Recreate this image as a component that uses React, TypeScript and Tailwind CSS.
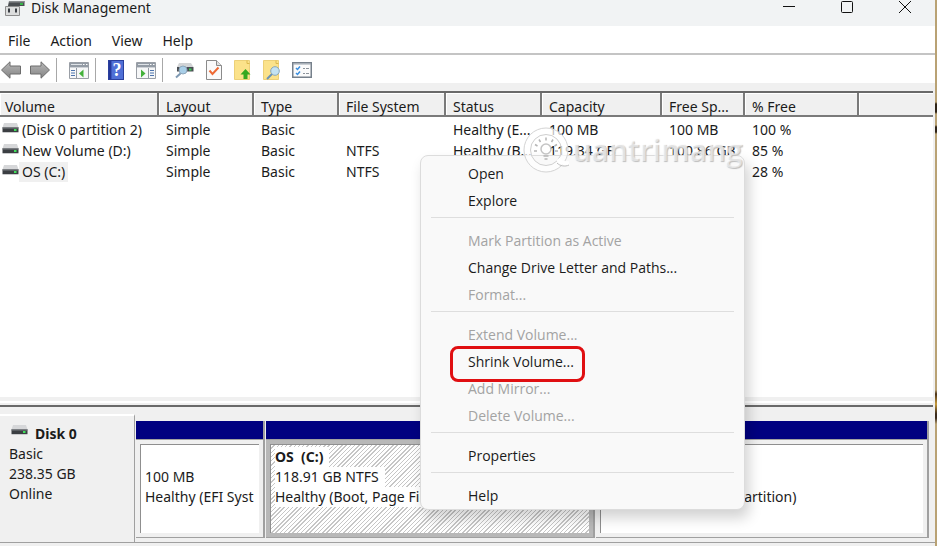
import type { ReactNode } from "react";

const volumes = [
  { name: "(Disk 0 partition 2)", layout: "Simple", type: "Basic", fs: "", status: "Healthy (E...", capacity: "100 MB", free: "100 MB", pct: "100 %" },
  { name: "New Volume (D:)", layout: "Simple", type: "Basic", fs: "NTFS", status: "Healthy (B...", capacity: "119.34 GB", free: "100.86 GB", pct: "85 %" },
  { name: "OS (C:)", layout: "Simple", type: "Basic", fs: "NTFS", status: "", capacity: "", free: "", pct: "28 %", selected: true },
];

const columns = ["Volume", "Layout", "Type", "File System", "Status", "Capacity", "Free Sp...", "% Free", ""];

const menuGroups: { label: string; disabled?: boolean; marked?: boolean }[][] = [
  [{ label: "Open" }, { label: "Explore" }],
  [{ label: "Mark Partition as Active", disabled: true }, { label: "Change Drive Letter and Paths..." }, { label: "Format...", disabled: true }],
  [
    { label: "Extend Volume...", disabled: true },
    { label: "Shrink Volume...", marked: true },
    { label: "Add Mirror...", disabled: true },
    { label: "Delete Volume...", disabled: true },
  ],
  [{ label: "Properties" }],
  [{ label: "Help" }],
];

function DriveIcon() {
  return (
    <svg width="17" height="10" viewBox="0 0 17 10" className="shrink-0" aria-hidden="true">
      <path d="M2 0h13l1.500 4.500H.5z" fill="#d6d7d9" />
      <path d="M.5 4.500h16V9H.5z" fill="#3b3e42" />
      <path d="M.5 4h16v1.500H.5z" fill="#7b7e82" />
      <path d="M12 6h2.500v2H12z" fill="#3fe05a" />
      <path d="M.5 9h16v1H.5z" fill="#c9cacc" />
    </svg>
  );
}

function ArrowIcon({ right }: { right?: boolean }) {
  return (
    <svg width="20" height="18" viewBox="0 0 20 18" className={right ? "-scale-x-100" : ""} aria-hidden="true">
      <defs>
        <linearGradient id="arrowFill" x1="0" y1="0" x2="0" y2="1">
          <stop offset="0" stopColor="#b8b8b8" />
          <stop offset="1" stopColor="#848484" />
        </linearGradient>
      </defs>
      <path d="M.5 9 9 .8V5h10.500v8H9v4.200z" fill="url(#arrowFill)" stroke="#6d6d6d" strokeLinejoin="round" />
    </svg>
  );
}

function PaneIcon({ right }: { right?: boolean }) {
  return (
    <svg width="20" height="17" viewBox="0 0 20 17" aria-hidden="true">
      <path d="M.5.5h19v16H.5z" fill="#f6f7f8" stroke="#9a9fa6" />
      <path d="M1 1h18v4H1z" fill="#939ba5" />
      <path d="M2 2.500h11" stroke="#dfe3e7" />
      <path d="M14 2.500h1.500M17 2.500h1.500" stroke="#fff" />
      <path d="M1 5.500h18" stroke="#cdd1d6" />
      {right ? (
        <>
          <path d="M12.500 6v10" stroke="#9299a2" />
          <path d="M14 8.500h4M14 11h4M14 13.500h4" stroke="#4d74ae" />
          <path d="m5 7.500 4.500 4-4.500 4z" fill="#43b13a" />
        </>
      ) : (
        <>
          <path d="M7.500 6v10" stroke="#9299a2" />
          <path d="M2 8.500h4M2 11h4M2 13.500h4" stroke="#4d74ae" />
          <path d="m14.500 7.500-4.500 4 4.500 4z" fill="#43b13a" />
        </>
      )}
    </svg>
  );
}

function HelpIcon() {
  return (
    <span className="flex h-5 w-4 items-center justify-center border border-[#2a3f9d] bg-linear-to-r from-[#24379a] from-15% to-[#4f6fd6] to-20% pl-0.5 font-['Liberation_Serif',serif] text-lg leading-5 font-bold text-white">
      ?
    </span>
  );
}

function DiskSearchIcon() {
  return (
    <svg width="19" height="17" viewBox="0 0 19 17" aria-hidden="true">
      <path d="M4 1h12l2.500 4H2z" fill="#d2d4d6" />
      <path d="M2 5h16.500v4.500H2z" fill="#4a4e53" />
      <path d="M14 6.500h2.500v2H14z" fill="#3fd15a" />
      <path d="m6 11-5 4.500" stroke="#7f99b3" strokeWidth="2" />
      <circle cx="8" cy="8" r="4" fill="#a9cfe8" stroke="#8ea7bb" />
    </svg>
  );
}

function CheckPageIcon() {
  return (
    <svg width="16" height="20" viewBox="0 0 16 20" aria-hidden="true">
      <path d="M.5.500h10l5 5v14H.5z" fill="#fafafa" stroke="#8b8b8b" />
      <path d="M10.500.500v5h5" fill="#e2e2e2" stroke="#8b8b8b" />
      <path d="m3.500 10.500 3 3.500 6-6.500" fill="none" stroke="#ee6a35" strokeWidth="2" />
    </svg>
  );
}

function FolderUpIcon() {
  return (
    <svg width="17" height="20" viewBox="0 0 17 20" aria-hidden="true">
      <path d="M.5.500h15v19H.5z" fill="#fbe28a" stroke="#ecd078" />
      <path d="M13 .500v3h2.500" fill="none" stroke="#dcb94e" />
      <path d="m11.500 9 5 5.500h-3V19h-4v-4.500h-3z" fill="#35a81f" />
    </svg>
  );
}

function FolderSearchIcon() {
  return (
    <svg width="17" height="20" viewBox="0 0 17 20" aria-hidden="true">
      <path d="M.5.500h15v19H.5z" fill="#fbe28a" stroke="#ecd078" />
      <path d="M13 .500v3h2.500" fill="none" stroke="#dcb94e" />
      <path d="m9 14-5 5" stroke="#6b93b5" strokeWidth="2" />
      <circle cx="12" cy="11" r="4.300" fill="#c3e2f2" stroke="#8aa6b8" />
    </svg>
  );
}

function ChecklistIcon() {
  return (
    <svg width="20" height="16" viewBox="0 0 20 16" aria-hidden="true">
      <path d="M.75.75h18.500v14.500H.75z" fill="#fbfbfb" stroke="#76808b" strokeWidth="1.500" />
      <path d="M1 2h18" stroke="#9aa3ad" />
      <path d="m4 6 1.500 1.500L8 4.500M4 11l1.500 1.500L8 9.500" fill="none" stroke="#3a8fe0" strokeWidth="1.500" />
      <path d="M11 6.500h2M14 6.500h3M11 11.500h2M14 11.500h3" stroke="#8d949c" />
    </svg>
  );
}

function AppIcon() {
  return (
    <svg width="20" height="16" viewBox="0 0 20 16" aria-hidden="true">
      <path d="M4 1h15.500v5H3z" fill="#4a4d50" />
      <path d="M4 1h15.500v1.500H4z" fill="#8a8d8f" />
      <path d="M15 3h3v2h-3z" fill="#35b548" />
      <path d="M.5 6.500h14v9H.5z" fill="#dcdddd" stroke="#8c8c8c" />
      <path d="M3 8.500h2v4H3zM10 8.500h2v4h-2z" fill="#3b3f44" />
    </svg>
  );
}

function ToolButton({ label, children }: { label: string; children: ReactNode }) {
  return (
    <button type="button" aria-label={label} className="flex shrink-0 items-center justify-center">
      {children}
    </button>
  );
}

function ToolDivider() {
  return <span className="mr-3 ml-1.5 h-6 w-px bg-[#a8a8a8]" />;
}

function Partition({ className, selected, children }: { className: string; selected?: boolean; children: ReactNode }) {
  return (
    <section className={`flex flex-col border-r-2 border-b border-[#a0a0a0] ${className}`}>
      <div className="h-[18px] bg-[#000080]" />
      <div className={`flex flex-1 border-t border-[#a0a0a0] p-1 ${selected ? "bg-[#b8b8b8]" : "bg-[#f0f0f0]"}`}>
        <div
          className={`flex min-w-0 flex-1 flex-col items-start overflow-hidden border-t border-l border-[#8f8f8f] pt-0.5 pl-1 leading-5 whitespace-nowrap ${
            selected
              ? "bg-white bg-[repeating-linear-gradient(135deg,#ffffff_0px,#ffffff_2px,#c6c6c6_2px,#c6c6c6_3px)]"
              : "bg-white"
          }`}
        >
          {children}
        </div>
      </div>
    </section>
  );
}

function ContextMenu() {
  return (
    <div
      role="menu"
      className="absolute top-[155px] left-[420px] w-[325px] rounded-lg border border-[#dcdcdc] bg-[#f9f9f9] pt-1 font-['Open_Sans',sans-serif] text-sm text-[#1b1b1b] shadow-[4px_8px_14px_rgba(0,0,0,0.18)]"
    >
      {menuGroups.map((group, i) => (
        <div key={i}>
          {i > 0 && <hr className="mx-2.5 mt-[3px] mb-[9px] border-[#dedede]" />}
          {group.map((item) => (
            <button
              key={item.label}
              type="button"
              role="menuitem"
              disabled={item.disabled}
              className="relative block h-[27px] w-full pl-[47px] text-left disabled:text-[#a3a3a3]"
            >
              {item.label}
              {item.marked && <span className="absolute -top-0.5 left-[29px] z-10 h-9 w-[135px] rounded-lg border-3 border-[#e00f12]" />}
            </button>
          ))}
        </div>
      ))}
    </div>
  );
}

function Watermark() {
  return (
    <div className="pointer-events-none absolute top-[126px] left-[523px] flex items-center gap-px" aria-hidden="true">
      <svg width="48" height="48" viewBox="0 0 48 48" fill="none">
        <circle cx="23" cy="24" r="18.500" stroke="#fff" strokeOpacity=".7" strokeWidth="7" />
        <circle cx="23" cy="24" r="22" stroke="#d4d4d4" />
        <circle cx="23" cy="24" r="15.500" stroke="#cfcfcf" />
        <path d="M35 33c3 4 7 5 11 4" stroke="#fff" strokeWidth="4" />
        <path d="M34 37c3 3 8 4 12 2" stroke="#bdbdbd" />
        <g stroke="#b5b5b5" strokeWidth="1.500">
          <path d="M23 11.500v3M16 13.500l1.500 2.500M30 13.500 28.500 16M12 18.500l2.500 1.500M34 18.500 31.500 20M11 25h3M35 25h-3" />
          <circle cx="23" cy="23" r="5" stroke="#c4c4c4" />
          <path d="M20.500 30h5M21.500 33h3" />
        </g>
      </svg>
      <span className="font-['Open_Sans',sans-serif] text-3xl leading-none font-semibold text-white/55 [text-shadow:1px_1px_1px_#bdbdbd]">uantrimang</span>
    </div>
  );
}

export default function App() {
  return (
    <div className="relative flex min-h-screen bg-[#f0f0f0] font-['Noto_Sans',sans-serif] text-sm text-[#1b1b1b]">
      <main className="flex min-w-0 flex-1 flex-col">
        <header className="flex h-[26px] items-start bg-[#f1f3f4] pr-px pl-[5px]">
          <AppIcon />
          <h1 className="flex-1 pl-1.5 leading-4">Disk Management</h1>
          <button type="button" aria-label="Minimize" className="flex h-3.5 w-[58px] items-center justify-center">
            <svg width="12" height="12" viewBox="0 0 12 12" stroke="#111"><path d="M0 5.500h12" /></svg>
          </button>
          <button type="button" aria-label="Maximize" className="flex h-3.5 w-[58px] items-center justify-center">
            <svg width="12" height="12" viewBox="0 0 12 12" fill="none" stroke="#111"><rect x=".5" y=".5" width="11" height="11" rx="1" /></svg>
          </button>
          <button type="button" aria-label="Close" className="flex h-3.5 w-[58px] items-center justify-center">
            <svg width="12" height="12" viewBox="0 0 12 12" stroke="#111"><path d="m0 0 12 12M12 0 0 12" /></svg>
          </button>
        </header>
        <nav className="flex h-[29px] items-center gap-5 border-b-2 border-[#c4c4c4] bg-white pt-0.5 pl-2">
          {["File", "Action", "View", "Help"].map((name) => (
            <button key={name} type="button">{name}</button>
          ))}
        </nav>
        <div className="flex h-7 items-center bg-white pt-0.5">
          <div className="flex gap-[9px] pl-px">
            <ToolButton label="Back"><ArrowIcon /></ToolButton>
            <ToolButton label="Forward"><ArrowIcon right /></ToolButton>
          </div>
          <ToolDivider />
          <ToolButton label="Show console tree"><PaneIcon /></ToolButton>
          <ToolDivider />
          <div className="flex gap-3">
            <ToolButton label="Help topics"><HelpIcon /></ToolButton>
            <ToolButton label="Show action pane"><PaneIcon right /></ToolButton>
          </div>
          <ToolDivider />
          <div className="flex items-center gap-3">
            <ToolButton label="Rescan disks"><DiskSearchIcon /></ToolButton>
            <ToolButton label="Check"><CheckPageIcon /></ToolButton>
            <ToolButton label="Up"><FolderUpIcon /></ToolButton>
            <ToolButton label="Explore"><FolderSearchIcon /></ToolButton>
            <ToolButton label="Properties"><ChecklistIcon /></ToolButton>
          </div>
        </div>

        <div className="mt-2 mr-0.5 flex-1 border-t-2 border-[#696969] bg-white">
          <table className="w-full table-fixed border-separate border-spacing-0 text-left">
            <colgroup>
              <col className="w-[159px]" />
              <col className="w-[95px]" />
              <col className="w-[85px]" />
              <col className="w-[107px]" />
              <col className="w-24" />
              <col className="w-[120px]" />
              <col className="w-[83px]" />
              <col className="w-[114px]" />
              <col />
            </colgroup>
            <thead>
              <tr className="h-6 bg-[#f0f0f0]">
                {columns.map((name) => (
                  <th
                    key={name}
                    className="border-r-2 border-b-2 border-[#7a7a7a] p-0 pt-1.5 pl-[7px] leading-4 font-normal whitespace-nowrap shadow-[inset_1px_1px_0_#fff] first:pl-[5px] last:border-r-0"
                  >
                    {name}
                  </th>
                ))}
              </tr>
            </thead>
            <tbody className="before:block before:h-0.5">
              {volumes.map((v) => (
                <tr key={v.name} className="h-[21px] whitespace-nowrap">
                  <td className="p-0 pl-0.5">
                    <span className="flex items-start">
                      <span className="pt-[3px]"><DriveIcon /></span>
                      <span className={`px-[3px] leading-5 ${v.selected ? "bg-[#f0f0f0]" : ""}`}>{v.name}</span>
                    </span>
                  </td>
                  {[v.layout, v.type, v.fs, v.status, v.capacity, v.free, v.pct].map((text, i) => (
                    <td key={i} className="p-0 pl-[7px] leading-5">{text}</td>
                  ))}
                </tr>
              ))}
            </tbody>
          </table>
        </div>

        <div className="mr-0.5 h-[10px] border-b-2 border-[#696969] bg-[#f0f0f0]">
          <div className="h-1 w-full" />
          <div className="h-0.5 bg-white" />
        </div>

        <div className="flex h-[136px] border-b border-[#a0a0a0] pt-[7px]">
          <section className="w-[135px] shrink-0 border-t-2 border-r border-t-white border-r-[#a0a0a0] pt-2 pl-[9px] leading-5">
            <h2 className="flex items-start font-bold">
              <span className="pt-px pl-0.5"><DriveIcon /></span>
              <span className="pl-[7px]">Disk 0</span>
            </h2>
            <p>Basic</p>
            <p>238.35 GB</p>
            <p>Online</p>
          </section>
          <div className="flex min-w-0 flex-1 gap-px pt-[7px] pr-1.5 pb-1 pl-px">
            <Partition className="w-[129px] shrink-0">
              <span>&nbsp;</span>
              <span>100 MB</span>
              <span>Healthy (EFI Syst</span>
            </Partition>
            <Partition className="w-[329px] shrink-0" selected>
              <strong className="bg-white pr-1.5">OS&nbsp; (C:)</strong>
              <span className="bg-white pr-1.5">118.91 GB NTFS</span>
              <span className="bg-white pr-1.5">Healthy (Boot, Page File</span>
            </Partition>
            <Partition className="min-w-0 flex-1">
              <span>&nbsp;</span>
              <span>&nbsp;</span>
              <span>Healthy (Basic Data Partition)</span>
            </Partition>
          </div>
        </div>
        <div className="h-[3px]" />
      </main>
      <div className="w-0.5 bg-[linear-gradient(#b9a274_102px,#2f2418_104px,#2f2418_112px,#b9a274_114px,#b9a274_125px,#2f2418_127px,#2f2418_132px,#b9a274_134px,#b9a274_390px,#4a3218_394px,#c79a3a_404px,#3a2a1c_414px,#3a2a1c_418px,#b9a274_424px)]" />
      <ContextMenu />
      <Watermark />
    </div>
  );
}
